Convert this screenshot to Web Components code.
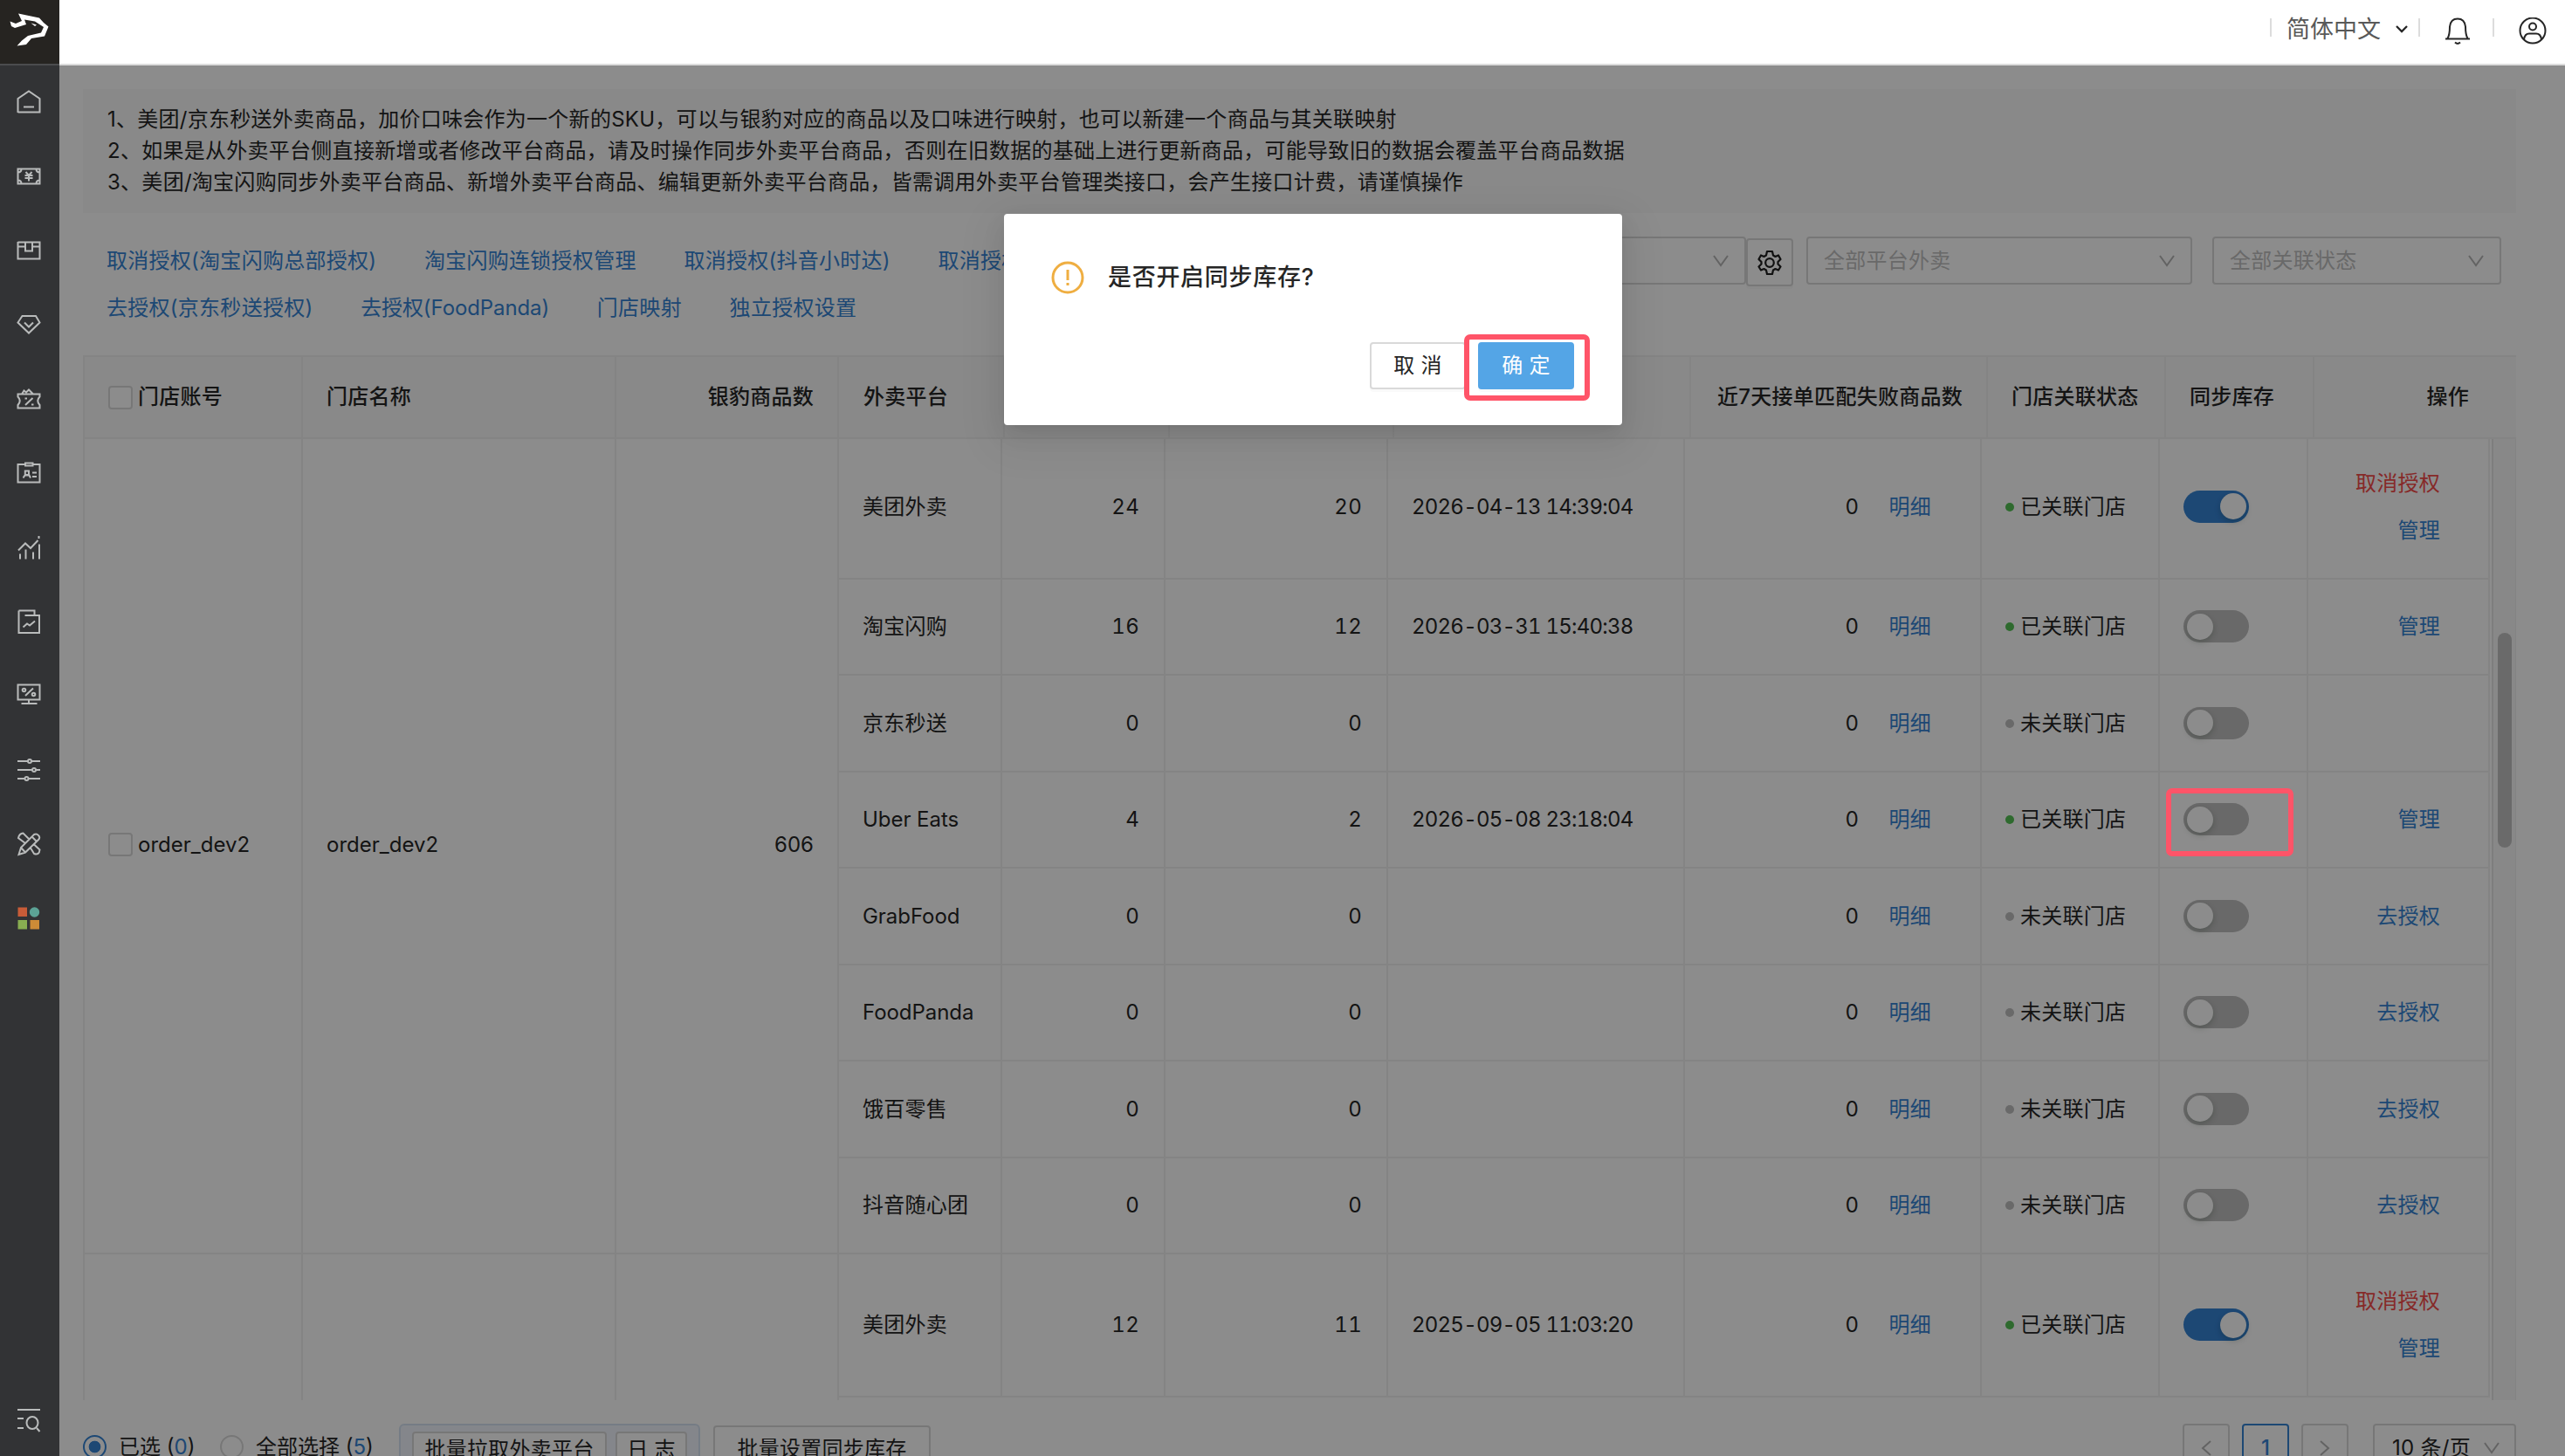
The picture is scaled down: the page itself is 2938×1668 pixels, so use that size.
<!DOCTYPE html>
<html lang="zh-CN">
<head>
<meta charset="utf-8">
<title>外卖平台商品</title>
<style>
    :root {
        --primary: #3583d4;
        --text: #262626;
        --line: #f0f0f0;
        --border: #d9d9d9;
    }

    * { box-sizing: border-box; }

    body {
        margin: 0;
        width: 2938px;
        height: 1668px;
        overflow: hidden;
        display: flex;
        background: #fff;
        color: var(--text);
        font: 24px/36px Inter, "Noto Sans CJK SC", sans-serif;
        letter-spacing: 0.27px;
    }

    .column {
        flex: 1;
        min-width: 0;
        display: flex;
        flex-direction: column;
    }

    main {
        position: relative;
        flex: 1;
        min-height: 0;
        padding: 27px 56px 0 27px;
        display: flex;
        flex-direction: column;
    }

    .toolbar {
        display: flex;
        justify-content: space-between;
        height: 163px;
        padding: 27px 17px 0 28px;
    }

    .filters {
        display: flex;
        align-items: flex-start;
    }

    .mask {
        position: absolute;
        inset: 0;
        background: rgba(0, 0, 0, 0.45);
    }

    confirm-modal {
        position: absolute;
        left: 1082px;
        top: 170px;
    }

    mark-box {
        position: absolute;
    }
</style>
</head>
<body>
<side-bar></side-bar>
<div class="column">
    <app-header></app-header>
    <main>
        <notice-box>
            <div>1、美团/京东秒送外卖商品，加价口味会作为一个新的SKU，可以与银豹对应的商品以及口味进行映射，也可以新建一个商品与其关联映射</div>
            <div>2、如果是从外卖平台侧直接新增或者修改平台商品，请及时操作同步外卖平台商品，否则在旧数据的基础上进行更新商品，可能导致旧的数据会覆盖平台商品数据</div>
            <div>3、美团/淘宝闪购同步外卖平台商品、新增外卖平台商品、编辑更新外卖平台商品，皆需调用外卖平台管理类接口，会产生接口计费，请谨慎操作</div>
        </notice-box>
        <div class="toolbar">
            <link-bar>
                <a>取消授权(淘宝闪购总部授权)</a>
                <a>淘宝闪购连锁授权管理</a>
                <a>取消授权(抖音小时达)</a>
                <a>取消授权</a>
                <a>去授权(京东秒送授权)</a>
                <a style="letter-spacing: -0.100px">去授权(FoodPanda)</a>
                <a>门店映射</a>
                <a>独立授权设置</a>
            </link-bar>
            <div class="filters">
                <select-box style="width: 400px"></select-box>
                <gear-button></gear-button>
                <select-box style="width: 442px; margin-left: 15px">全部平台外卖</select-box>
                <select-box style="width: 331px; margin-left: 23px">全部关联状态</select-box>
            </div>
        </div>
        <store-table></store-table>
        <page-footer></page-footer>
        <div class="mask"></div>
        <confirm-modal>是否开启同步库存?</confirm-modal>
        <mark-box style="left: 1609px; top: 308px; width: 144px; height: 76px"></mark-box>
        <mark-box style="left: 2413px; top: 828px; width: 146px; height: 78px"></mark-box>
    </main>
</div>

<script>
const RESET = '* { box-sizing: border-box; } svg { display: block; fill: none; }';

function define(name, render) {
    customElements.define(name, class extends HTMLElement {
        connectedCallback() {
            this.attachShadow({ mode: 'open' });
            this.shadowRoot.innerHTML = `<style>${RESET}</style>` + render(this);
        }
    });
}

// 28x28 sidebar icons
const icons = [
    // home
    '<path d="M1.500 26V10L14 1.500 26.500 10V25.500H1.500M8 19.500H20"/>',
    // money
    '<path d="M1.500 5.500H26.500V22.500H1.500ZM1.500 9.500Q5.500 9.500 5.500 5.500M22.500 5.500Q22.500 9.500 26.500 9.500M1.500 18.500Q5.500 18.500 5.500 22.500M22.500 22.500Q22.500 18.500 26.500 18.500M10.500 9L14 13 17.500 9M9.500 13H18.500M9.500 16H18.500M14 13V19.500"/>',
    // package
    '<path d="M1.500 4V23.500H26.500V4.500H1.500M1.500 9.500H10M18 9.500H26.500M10 4.500V14.500H18V4.500"/>',
    // diamond
    '<path d="M6.500 4H22L26.500 11.500 14 23.500 1.500 11.500ZM9 11.500L14 16.500 19 11.500"/>',
    // coupon
    '<path d="M1.500 8.500H26.500V11.500Q22 16 26.500 21V24.500H1.500V21Q6 16 1.500 11.500ZM6 8.500L8.500 4.500 11 6.500 14 3.500 19 8.500M18.500 13L10 21M9.500 13.500H12M17 20.500H19.500"/>',
    // badge
    '<path d="M10 4H1.500V24.500H26.500V4H18.500M10 2.500H18.500V5.500H10ZM7.500 19.500L9.500 16.500H14.500L16 19.500M9.800 11.500H14V16H9.800ZM18 13.500H23M18 18H23"/>',
    // chart
    '<path d="M2 17.500L10 9.500 16 15 24.500 6M4 21.500V27.500M10.500 16.500V27.500M19 19.500V27.500M26 10.500V27.500M25.500 1V4"/>',
    // report
    '<path d="M2.500 1.500H20.500V7M9.500 7H26V27H2.500V1.500M7.500 20.500L12 16.500 15 18.500 21 13.500"/>',
    // monitor
    '<path d="M1.500 1.500H26.500V18.500H1.500ZM14 18.500V23M5.500 23H23.500M19 5.500L10 14"/><circle cx="8.500" cy="7.500" r="1.800"/><circle cx="19.500" cy="12.500" r="1.800"/>',
    // sliders
    '<path d="M1 4H13M17 4H27M1 14H18M22 14H27M1 24H9.500M13.500 24H27"/><circle cx="15" cy="4" r="2"/><circle cx="20" cy="14" r="2"/><circle cx="11.500" cy="24" r="2"/>',
    // pencil and ruler
    '<path d="M2.500 26L5 18 20 3Q23 1.500 25 4 27.500 6.500 25 9L10 23.500ZM17.500 5.500L23 11M5 18L10 23.500M10 13L2 7Q3 2 7.500 1.500L14.500 8.500M16 18.500L20 25Q26 27 26.500 20.500L19.500 14"/>'
];

define('side-bar', () => `
    <style>
        :host { display: flex; flex-direction: column; width: 68px; background: #323335; }
        .logo { height: 75px; background: #262421; border-bottom: 2px solid #4b4c4e; }
        .item { height: 85px; padding-left: 19px; display: flex; align-items: center; flex: none; }
        .item svg { stroke: #b9bbbb; stroke-width: 2; }
        .logo + .item { margin-top: -1px; }
        .search { margin-top: auto; height: 82px; }
    </style>
    <div class="logo">
        <svg width="68" height="73"><path d="M11.500 24.500L18 27 25 24 21 15.500 45 20.500 50 26 55.500 30.500 51 41.500 36 44 30 51 19.500 52.500 25 46.500 32 41 47 37.500 50 31 40 24.500 28 22.500 30 28 17 32 13 30Z" fill="#fff"/><path d="M35.500 26.500L42 28.500 40 30Z" fill="#fff"/></svg>
    </div>
    ${icons.map(i => `<div class="item"><svg width="28" height="28">${i}</svg></div>`).join('')}
    <div class="item"><svg width="28" height="28" style="stroke: none">
        <path d="M1.500 1.500H12V12H1.500Z" fill="#c85c38"/><circle cx="20.500" cy="7" r="5.700" fill="#5ca396"/>
        <path d="M1.500 16H12V26.500H1.500Z" fill="#88ad51"/><path d="M15.500 16H26V26.500H15.500Z" fill="#cc8b37"/>
    </svg></div>
    <div class="item search"><svg width="28" height="28"><path d="M1 2H27M1 12H8M1 23H8M23 23L26.500 27"/><ellipse cx="18" cy="17" rx="6.500" ry="7"/></svg></div>
`);

define('app-header', () => `
    <style>
        :host { display: flex; align-items: flex-start; justify-content: flex-end; height: 75px; padding: 20px 21px 0 0; border-bottom: 2px solid #dcdcdc; background: #fff; flex: none; }
        i { width: 2px; height: 21px; margin-top: 1px; background: #dcdcdc; }
        span { margin: -4px 16px 0 17px; font-size: 27px; color: #595959; letter-spacing: 0; }
        svg { stroke: #262626; stroke-width: 2; }
    </style>
    <i></i><span>简体中文</span>
    <svg width="16" height="30" style="margin-right: 11px"><path d="M2 10L8 16 14 10" stroke-width="2.300"/></svg>
    <i></i>
    <svg width="30" height="32" style="margin: 0 25px 0 28px"><path d="M1 24.500H29M3.500 24Q6 20 6 10.500 7 1.500 15 1.500 23 1.500 24 10.500 24 20 26.500 24M12 28.500Q15 31.500 18 28.500"/></svg>
    <i></i>
    <svg width="32" height="32" style="margin-left: 28px"><circle cx="16" cy="15" r="14.500"/><circle cx="16" cy="10.500" r="4"/><path d="M6 25Q7 18.500 12 18.500H20Q25 18.500 26 25"/></svg>
`);

define('notice-box', () => `
    <style>:host { display: block; flex: none; height: 142px; padding: 17px 28px; background: #fafafa; }</style>
    <slot></slot>
`);

define('link-bar', () => `
    <style>
        :host { display: flex; flex-wrap: wrap; align-content: flex-start; column-gap: 54.700px; width: 1160px; margin-left: -1px; padding-top: 1px; color: var(--primary); }
        ::slotted(a) { line-height: 54px; white-space: nowrap; }
    </style>
    <slot></slot>
`);

define('select-box', () => `
    <style>
        :host { display: flex; align-items: center; justify-content: space-between; height: 55px; padding: 0 18px; border: 2px solid var(--border); border-radius: 4px; background: #fff; color: #bfbfbf; }
        svg { stroke: #b5b5b5; stroke-width: 2; }
    </style>
    <span><slot></slot></span>
    <svg width="18" height="14"><path d="M1 1L9 12 17 1"/></svg>
`);

define('gear-button', () => `
    <style>
        :host { display: grid; place-items: center; width: 54px; height: 55px; margin-top: 2px; border: 2px solid var(--border); border-radius: 4px; background: #fff; box-shadow: 0 3px 0 rgba(0, 0, 0, 0.02); }
        svg { stroke: #1f1f1f; stroke-width: 2.200; stroke-linejoin: round; }
    </style>
    <svg width="28" height="30"><path d="M11 2H17L18 6.500 20.500 8 24 6.500 26.500 11 23.500 14V16.500L26.500 19.500 24 23.500 20.500 22 18 23.500 17 28H11L10 23.500 7.500 22 4 23.500 1.500 19.500 4.500 16.500V14L1.500 11 4 6.500 7.500 8 10 6.500Z"/><circle cx="14" cy="15" r="4.800"/></svg>
`);

define('check-box', () => `
    <style>:host { display: block; width: 28px; height: 27px; border: 2px solid var(--border); border-radius: 4px; background: #fff; flex: none; }</style>
`);

define('toggle-switch', el => `
    <style>
        :host { display: block; width: 75px; height: 37px; padding: 3.500px; border-radius: 19px; background: ${el.hasAttribute('on') ? 'var(--primary)' : '#bfbfbf'}; }
        i { display: block; width: 30px; height: 30px; margin-left: ${el.hasAttribute('on') ? '38px' : '0'}; border-radius: 50%; background: #fff; box-shadow: 0 3px 7px rgba(0, 35, 11, 0.2); }
    </style>
    <i></i>
`);

define('platform-row', el => {
    const [name, count, linked, time, status, on, actions] = JSON.parse(el.dataset.row);
    return `
    <style>
        :host { display: grid; grid-template-columns: 187px 187px 255px 340px 340px 204px 170px 208px; height: 110.500px; }
        :host([first]) { height: 160.500px; }
        :host([tall]) { height: 163.500px; }
        .cell { display: flex; align-items: center; padding: 1px 27px 0; border-right: 2px solid var(--line); border-bottom: 2px solid var(--line); white-space: nowrap; }
        :host([first]) .cell { padding-bottom: 4px; }
        .name { letter-spacing: ${/[a-z]/.test(name) ? '-0.05px' : 'inherit'}; }
        .cell.num { justify-content: flex-end; font-variant-numeric: tabular-nums; padding-right: 28px; }
        .time { font-variant-numeric: tabular-nums; letter-spacing: -0.780px; }
        .link { color: var(--primary); }
        .cell.fail { gap: 34px; padding-right: 56px; }
        .dot { width: 10px; height: 10px; border-radius: 50%; margin-right: 7px; background: ${status === '已' ? '#54c254' : '#bfbfbf'}; }
        .cell.switch { padding-top: 0; }
        .cell.ops { flex-direction: column; align-items: flex-end; justify-content: center; line-height: 54px; padding-right: 55px; color: var(--primary); }
        .red { color: #f54c4a; }
    </style>
    <div class="cell name">${name}</div>
    <div class="cell num">${count}</div>
    <div class="cell num">${linked}</div>
    <div class="cell time">${time}</div>
    <div class="cell num fail"><span>0</span><span class="link">明细</span></div>
    <div class="cell"><i class="dot"></i>${status}关联门店</div>
    <div class="cell switch"><toggle-switch ${on ? 'on' : ''}></toggle-switch></div>
    <div class="cell ops">${actions.map(a => `<span class="${a === '取消授权' ? 'red' : ''}">${a}</span>`).join('')}</div>
`;
});

const rows = [
    ['美团外卖', 24, 20, '2026-04-13 14:39:04', '已', 1, ['取消授权', '管理']],
    ['淘宝闪购', 16, 12, '2026-03-31 15:40:38', '已', 0, ['管理']],
    ['京东秒送', 0, 0, '', '未', 0, []],
    ['Uber Eats', 4, 2, '2026-05-08 23:18:04', '已', 0, ['管理']],
    ['GrabFood', 0, 0, '', '未', 0, ['去授权']],
    ['FoodPanda', 0, 0, '', '未', 0, ['去授权']],
    ['饿百零售', 0, 0, '', '未', 0, ['去授权']],
    ['抖音随心团', 0, 0, '', '未', 0, ['去授权']]
];
const nextRow = ['美团外卖', 12, 11, '2025-09-05 11:03:20', '已', 1, ['取消授权', '管理']];

const rowTag = (r, attr) => `<platform-row ${attr} data-row='${JSON.stringify(r)}'></platform-row>`;

define('store-table', () => `
    <style>
        :host { display: block; flex: none; height: 1197px; border-top: 2px solid var(--line); overflow: hidden; }
        .head { display: grid; grid-template-columns: 250px 359px 255px 190px 189px 257px 340px 340px 204px 170px 231px; height: 94px; background: #fafafa; border-bottom: 2px solid var(--line); border-left: 2px solid var(--line); font-weight: 500; }
        .head div { display: flex; align-items: center; padding: 0 27px; border-right: 2px solid var(--line); white-space: nowrap; }
        .head .num { justify-content: flex-end; }
        .head div:nth-child(4) { padding-left: 28px; }
        .head div:last-child { padding-right: 54px; border-right: 0; }
        check-box { margin-right: 6px; }
        .body { display: flex; height: 1101px; }
        .groups { width: 2757px; height: 1101px; overflow: hidden; border-left: 2px solid var(--line); flex: none; }
        .group { display: grid; grid-template-columns: 250px 359px 255px 1fr; }
        .group:last-child { height: 300px; }
        .cell { display: flex; align-items: center; padding: 0 27px 3px; border-right: 2px solid var(--line); border-bottom: 2px solid var(--line); letter-spacing: 0; }
        .num { justify-content: flex-end; }
        .scroll { flex: 1; margin-left: 2px; padding: 222px 4px 0 5px; background: #f7f7f7; border-left: 2px solid #e6e6e6; border-right: 1px solid #eee; }
        .thumb { width: 16px; height: 246px; border-radius: 8px; background: #c1c1c1; }
    </style>
    <div class="head">
        <div><check-box></check-box>门店账号</div><div>门店名称</div><div class="num">银豹商品数</div><div>外卖平台</div>
        <div></div><div></div><div></div>
        <div class="num">近7天接单匹配失败商品数</div><div>门店关联状态</div><div>同步库存</div><div class="num">操作</div>
    </div>
    <div class="body">
        <div class="groups">
            <div class="group">
                <div class="cell"><check-box></check-box>order_dev2</div>
                <div class="cell">order_dev2</div>
                <div class="cell num">606</div>
                <div>${rows.map((r, i) => rowTag(r, i ? '' : 'first')).join('')}</div>
            </div>
            <div class="group">
                <div class="cell"></div><div class="cell"></div><div class="cell"></div>
                <div>${rowTag(nextRow, 'tall')}</div>
            </div>
        </div>
        <div class="scroll"><div class="thumb"></div></div>
    </div>
`);

define('page-footer', () => `
    <style>
        :host { display: flex; justify-content: space-between; align-items: flex-start; height: 64px; padding-top: 27px; overflow: hidden; flex: none; background: #fff; }
        .left, .right { display: flex; white-space: nowrap; }
        .left { line-height: 54px; }
        .radio { width: 27px; height: 27px; margin-top: 13px; border: 2px solid var(--border); border-radius: 50%; flex: none; }
        .radio.on { border-color: var(--primary); background: radial-gradient(circle, var(--primary) 6.500px, transparent 7.200px); }
        .left span { width: 116px; margin-left: 14px; letter-spacing: 0; }
        .left .all { width: 151px; }
        .left b { font-weight: 400; color: var(--primary); }
        .panel { display: flex; gap: 10px; height: 59px; padding: 7px 13px; border: 2px solid #d6e2f2; border-radius: 6px; background: #f0f5fd; }
        .btn { height: 55px; line-height: 50px; text-align: center; border: 2px solid var(--border); border-radius: 4px; background: #fff; }
        .panel .btn { height: 41px; line-height: 37px; }
        .page { display: grid; place-items: center; width: 54px; height: 55px; margin-right: 14px; border: 2px solid var(--border); border-radius: 4px; }
        .page.on { color: var(--primary); border-color: var(--primary); font-weight: 500; }
        .page svg { stroke: #b5b5b5; stroke-width: 2; }
        select-box { width: 164px; padding: 0 17px 0 20px; margin-left: 14px; color: var(--text); }
    </style>
    <div class="left">
        <div class="radio on"></div><span>已选 (<b>0</b>)</span>
        <div class="radio"></div><span class="all">全部选择 (<b>5</b>)</span>
        <div style="width: 13px"></div>
        <div class="panel"><div class="btn" style="width: 223px">批量拉取外卖平台</div><div class="btn" style="width: 82px">日 志</div></div>
        <div class="btn" style="width: 249px; margin: 2px 0 0 15px">批量设置同步库存</div>
    </div>
    <div class="right">
        <div class="page"><svg width="12" height="18"><path d="M11 1L2 9 11 17"/></svg></div>
        <div class="page on">1</div>
        <div class="page"><svg width="12" height="18"><path d="M1 1L10 9 1 17"/></svg></div>
        <select-box>10 条/页</select-box>
    </div>
`);

define('confirm-modal', () => `
    <style>
        :host { display: flex; flex-direction: column; justify-content: space-between; width: 708px; height: 242px; padding: 54px 55px 41px 54px; border-radius: 4px; background: #fff; box-shadow: 0 5px 10px -7px rgba(0, 0, 0, 0.12), 0 10px 27px rgba(0, 0, 0, 0.08), 0 15px 48px 14px rgba(0, 0, 0, 0.05); }
        .title { display: flex; align-items: center; gap: 27px; font-size: 27px; font-weight: 500; letter-spacing: 0.700px; }
        .title svg { stroke: #efae41; stroke-width: 3; }
        .actions { display: flex; justify-content: flex-end; gap: 14px; }
        button { width: 110px; height: 54px; padding: 0; border: 2px solid var(--border); border-radius: 4px; background: #fff; color: var(--text); font: inherit; letter-spacing: inherit; box-shadow: 0 3px 0 rgba(0, 0, 0, 0.02); }
        .ok { border-color: #54a5e6; background: #54a5e6; color: #fff; }
    </style>
    <div class="title">
        <svg width="38" height="38"><circle cx="19" cy="19" r="17"/><path d="M19 10V22M19 25V28"/></svg>
        <span><slot></slot></span>
    </div>
    <div class="actions"><button>取 消</button><button class="ok">确 定</button></div>
`);

define('mark-box', () => `
    <style>:host { display: block; border: 6px solid #ff5468; border-radius: 7px; }</style>
`);
</script>
</body>
</html>
